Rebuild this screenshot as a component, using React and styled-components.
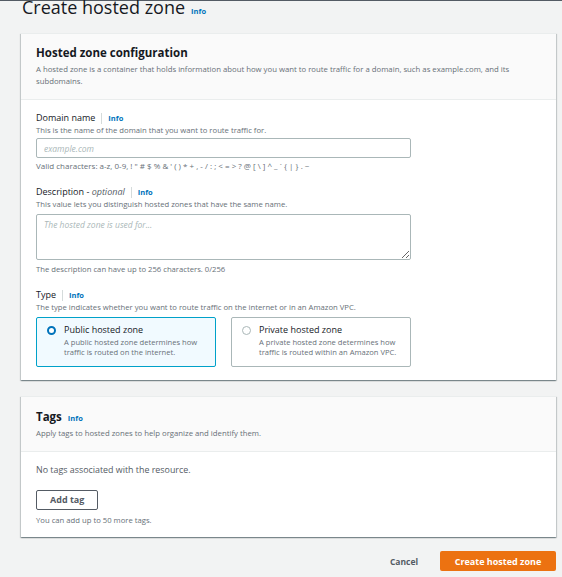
import React from "react";
import styled, { createGlobalStyle } from "styled-components";

const GlobalStyle = createGlobalStyle`
  html, body { margin: 0; padding: 0; background: #f2f3f3; }
  body { font-family: "Open Sans", "DejaVu Sans", sans-serif; color: #16191f; overflow: hidden; }
  * { box-sizing: border-box; }
`;

const Page = styled.div`
  display: flex;
  flex-direction: column;
  padding: 0 6px 0 21px;
  width: 562px;
  height: 577px;
`;

const TopLine = styled.div`
  height: 1px;
  background: #545b64;
  margin: 0 -6px 0 -21px;
`;

const TitleRow = styled.div`
  display: flex;
  align-items: baseline;
  gap: 6px;
  height: 35px;
  margin-top: -3px;
  padding-left: 1px;
`;

const Title = styled.h1`
  margin: 0;
  font-size: 18px;
  line-height: 18px;
  font-weight: 400;
  color: #16191f;
`;

const Info = styled.a`
  font-size: 7.5px;
  font-weight: 700;
  color: #0073bb;
  text-decoration: none;
  line-height: 12px;
`;

const Panel = styled.section`
  background: #ffffff;
  border-top: 1px solid #eaeded;
  box-shadow: 0 1px 1px 0 rgba(0, 28, 36, 0.3), 1px 1px 1px 0 rgba(0, 28, 36, 0.15),
    -1px 1px 1px 0 rgba(0, 28, 36, 0.15);
  margin-top: ${(p) => p.$mt || 0}px;
`;

const PanelHeader = styled.header`
  background: #fafafa;
  border-bottom: 1px solid #eaeded;
  padding: ${(p) => p.$pt}px 15px 12px;
`;

const PanelTitleRow = styled.div`
  display: flex;
  align-items: baseline;
  gap: 6px;
`;

const PanelTitle = styled.h2`
  margin: 0;
  font-size: 11.5px;
  line-height: 16px;
  font-weight: 700;
  color: #16191f;
`;

const PanelDesc = styled.p`
  margin: 2px 0 0;
  font-size: 7.75px;
  line-height: 12px;
  color: #687078;
  max-width: 484px;
`;

const PanelBody = styled.div`
  padding: 12px 15px ${(p) => p.$pb}px;
  display: flex;
  flex-direction: column;
  align-items: flex-start;
`;

const Field = styled.div`
  display: flex;
  flex-direction: column;
  width: 375px;
  margin-top: ${(p) => p.$mt || 0}px;
`;

const LabelRow = styled.div`
  display: flex;
  align-items: center;
  height: 12px;
`;

const Label = styled.label`
  font-size: 9px;
  line-height: 12px;
  color: #16191f;
  em { font-style: italic; color: #545b64; }
`;

const Divider = styled.span`
  width: 1px;
  height: 11px;
  background: #d5dbdb;
  margin: 0 6px;
`;

const Hint = styled.div`
  font-size: ${(p) => p.$size || 7.7}px;
  line-height: 12px;
  color: #687078;
  margin-top: ${(p) => p.$mt || 0}px;
  white-space: nowrap;
`;

const TextInput = styled.input`
  margin-top: 2px;
  height: 20px;
  width: 100%;
  border: 1px solid #aab7b8;
  border-radius: 2px;
  background: #fff;
  padding: 0 7px;
  font-family: inherit;
  font-size: 8.5px;
  outline: none;
  &::placeholder { color: #aab7b8; font-style: italic; }
`;

const TextArea = styled.textarea`
  margin-top: 4px;
  height: 46px;
  width: 100%;
  border: 1px solid #aab7b8;
  border-radius: 2px;
  background: #fff;
  padding: 4px 7px;
  font-family: inherit;
  font-size: 8.5px;
  line-height: 12px;
  resize: vertical;
  outline: none;
  display: block;
  &::placeholder { color: #aab7b8; font-style: italic; }
`;

const Tiles = styled.div`
  display: grid;
  grid-template-columns: 1fr 1fr;
  gap: 15px;
  margin-top: 4px;
`;

const Tile = styled.div`
  display: grid;
  grid-template-columns: 9px 1fr;
  column-gap: 8px;
  height: 50px;
  padding: 6px 9px 0 10px;
  border: 1px solid ${(p) => (p.$selected ? "#00a1c9" : "#aab7b8")};
  background: ${(p) => (p.$selected ? "#f1faff" : "#ffffff")};
  border-radius: 2px;
`;

const Radio = styled.span`
  width: 9px;
  height: 9px;
  margin-top: 1.5px;
  border-radius: 50%;
  background: #fff;
  border: ${(p) => (p.$checked ? "2.5px solid #0073bb" : "1px solid #aab7b8")};
`;

const TileText = styled.div`
  display: flex;
  flex-direction: column;
`;

const TileLabel = styled.div`
  font-size: 9px;
  line-height: 12px;
  color: #16191f;
`;

const TileDesc = styled.div`
  margin-top: 1px;
  font-size: 7.6px;
  line-height: 10px;
  color: #687078;
`;

const BodyText = styled.div`
  font-size: 8.9px;
  line-height: 12px;
  color: #545b64;
`;

const SecondaryButton = styled.button`
  margin-top: 14px;
  height: 20px;
  padding: 0 13px;
  border: 1px solid #545b64;
  border-radius: 2px;
  background: #fff;
  color: #545b64;
  font-family: inherit;
  font-size: 9px;
  font-weight: 700;
  line-height: 18px;
`;

const Footer = styled.div`
  display: flex;
  justify-content: flex-end;
  align-items: center;
  margin-top: 14px;
`;

const LinkButton = styled.button`
  height: 20px;
  padding: 0 22px;
  border: none;
  background: transparent;
  color: #545b64;
  font-family: inherit;
  font-size: 8.5px;
  font-weight: 700;
`;

const PrimaryButton = styled.button`
  height: 20px;
  width: 116px;
  border: none;
  border-radius: 2px;
  background: #ec7211;
  color: #fff;
  font-family: inherit;
  font-size: 9px;
  font-weight: 700;
`;

function FieldLabel({ children, info = true }) {
  return (
    <LabelRow>
      <Label>{children}</Label>
      {info && (
        <>
          <Divider />
          <Info>Info</Info>
        </>
      )}
    </LabelRow>
  );
}

export default function App() {
  return (
    <>
      <GlobalStyle />
      <Page>
        <TopLine />
        <TitleRow>
          <Title>Create hosted zone</Title>
          <Info>Info</Info>
        </TitleRow>

        <Panel>
          <PanelHeader $pt={11}>
            <PanelTitle>Hosted zone configuration</PanelTitle>
            <PanelDesc>
              A hosted zone is a container that holds information about how you want to route traffic for a
              domain, such as example.com, and its subdomains.
            </PanelDesc>
          </PanelHeader>
          <PanelBody $pb={13}>
            <Field>
              <FieldLabel>Domain name</FieldLabel>
              <Hint>This is the name of the domain that you want to route traffic for.</Hint>
              <TextInput placeholder="example.com" />
              <Hint $mt={2} $size={8}>
                Valid characters: a-z, 0-9, ! " # $ % &amp; ' ( ) * + , - / : ; &lt; = &gt; ? @ [ \ ] ^ _ ` {"{"} | {"}"} . ~
              </Hint>
            </Field>
            <Field $mt={14}>
              <FieldLabel>
                Description - <em>optional</em>
              </FieldLabel>
              <Hint>This value lets you distinguish hosted zones that have the same name.</Hint>
              <TextArea placeholder="The hosted zone is used for..." />
              <Hint $mt={3}>The description can have up to 256 characters. 0/256</Hint>
            </Field>
            <Field $mt={14}>
              <FieldLabel>Type</FieldLabel>
              <Hint>The type indicates whether you want to route traffic on the internet or in an Amazon VPC.</Hint>
              <Tiles>
                <Tile $selected>
                  <Radio $checked />
                  <TileText>
                    <TileLabel>Public hosted zone</TileLabel>
                    <TileDesc>
                      A public hosted zone determines how
                      <br />
                      traffic is routed on the internet.
                    </TileDesc>
                  </TileText>
                </Tile>
                <Tile>
                  <Radio />
                  <TileText>
                    <TileLabel>Private hosted zone</TileLabel>
                    <TileDesc>
                      A private hosted zone determines how
                      <br />
                      traffic is routed within an Amazon VPC.
                    </TileDesc>
                  </TileText>
                </Tile>
              </Tiles>
            </Field>
          </PanelBody>
        </Panel>

        <Panel $mt={16}>
          <PanelHeader $pt={12}>
            <PanelTitleRow>
              <PanelTitle>Tags</PanelTitle>
              <Info>Info</Info>
            </PanelTitleRow>
            <PanelDesc>Apply tags to hosted zones to help organize and identify them.</PanelDesc>
          </PanelHeader>
          <PanelBody $pb={11}>
            <BodyText>No tags associated with the resource.</BodyText>
            <SecondaryButton>Add tag</SecondaryButton>
            <Hint $mt={4}>You can add up to 50 more tags.</Hint>
          </PanelBody>
        </Panel>

        <Footer>
          <LinkButton>Cancel</LinkButton>
          <PrimaryButton>Create hosted zone</PrimaryButton>
        </Footer>
      </Page>
    </>
  );
}
